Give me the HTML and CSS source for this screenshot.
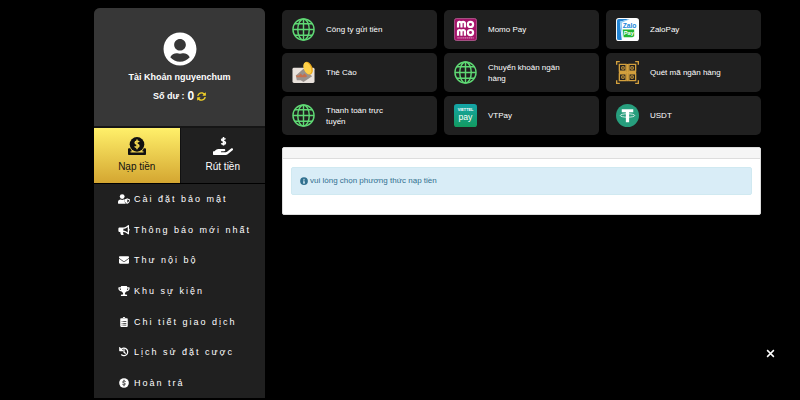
FILE: index.html
```html
<!DOCTYPE html>
<html lang="vi">
<head>
<meta charset="utf-8">
<meta name="viewport" content="width=device-width, initial-scale=1">
<title>Nạp tiền</title>
<link rel="stylesheet" href="styles.css">
</head>
<body>
<svg class="sprite" aria-hidden="true">
  <symbol id="globe" viewBox="0 0 24 24">
    <g fill="none" stroke="#5fd874" stroke-width="1.5">
      <circle cx="12" cy="12" r="11"/><ellipse cx="12" cy="12" rx="6" ry="11"/>
      <path d="M12 1v22M1 12h22M3 6h18M3 18h18"/>
    </g>
  </symbol>
</svg>
<div class="layout">
  <aside class="sidebar">
    <section class="profile">
      <svg class="avatar" viewBox="0 0 496 512" fill="currentColor" aria-hidden="true"><path d="M248 8C111 8 0 119 0 256s111 248 248 248 248-111 248-248S385 8 248 8zm0 96c48.600 0 88 39.400 88 88s-39.400 88-88 88-88-39.400-88-88 39.400-88 88-88zm0 344c-58.700 0-111.300-26.600-146.500-68.200 18.800-35.400 55.600-59.800 98.500-59.800 2.400 0 4.800.4 7.100 1.100 13 4.200 26.600 6.900 40.900 6.900 14.300 0 28-2.700 40.900-6.900 2.300-.7 4.700-1.100 7.100-1.100 42.900 0 79.700 24.400 98.500 59.800C359.300 421.400 306.700 448 248 448z"/></svg>
      <p class="name">Tài Khoản nguyenchum</p>
      <p class="balance">Số dư : <span class="amount">0</span>
        <button class="refresh" type="button" aria-label="Làm mới số dư"><svg viewBox="0 0 512 512" fill="currentColor"><path d="M370.700 133.300C339.500 104 298.900 88 255.800 88c-77.500.1-144.300 53.200-162.800 126.900-1.300 5.400-6.100 9.100-11.700 9.100H24.100c-7.500 0-13.200-6.800-11.800-14.200C33.900 94.900 134.800 8 256 8c66.400 0 126.800 26.100 171.300 68.700L463 41c15.100-15.100 41-4.400 41 17v134c0 13.300-10.700 24-24 24H346c-21.400 0-32.100-25.900-17-41l41.700-41.700zM32 296h134c21.400 0 32.100 25.900 17 41l-41.800 41.800c31.300 29.300 71.800 45.300 114.900 45.300 77.400-.1 144.300-53.100 162.800-126.800 1.300-5.400 6.100-9.100 11.700-9.100h57.300c7.500 0 13.200 6.800 11.800 14.200C478.100 417.100 377.200 504 256 504c-66.400 0-126.800-26.100-171.300-68.700L49 471c-15.100 15.100-41 4.400-41-17V320c0-13.300 10.700-24 24-24z"/></svg></button>
      </p>
    </section>
    <nav class="tabs">
      <a class="tab active" href="#nap">
        <svg viewBox="0 0 512 512" aria-hidden="true"><path fill="currentColor" d="M480 320h-34c-8 30-26 60-50 84h44v36H72v-36h44c-24-24-42-54-50-84H32c-18 0-32 14-32 32v128c0 18 14 32 32 32h448c18 0 32-14 32-32V352c0-18-14-32-32-32z"/><circle cx="256" cy="208" r="208" fill="currentColor"/><path d="M320 136c-18-18-112-36-118 20-7 64 114 36 110 102-4 50-98 42-122 8M256 68v280" fill="none" stroke="#f3d850" stroke-width="42"/></svg>
        <span>Nạp tiền</span>
      </a>
      <a class="tab" href="#rut">
        <svg class="hand" viewBox="0 0 576 512" aria-hidden="true"><path d="M362 62c-20-22-110-30-114 16-4 54 116 34 112 90-4 46-96 42-118 8M303 0v240" fill="none" stroke="currentColor" stroke-width="44"/><path fill="currentColor" d="M565 328c-12-11-30-10-43 0L404 422c-12 9-26 14-40 14H243c-9 0-16-7-16-16s7-16 16-16h78c16 0 31-11 33-27 3-20-12-37-32-37H162c-27 0-53 9-74 26l-47 38H16c-9 0-16 7-16 16v76c0 9 7 16 16 16h357c15 0 29-5 40-14l151-121c16-12 16-36 1-49z"/></svg>
        <span>Rút tiền</span>
      </a>
    </nav>
    <nav class="menu">
      <a href="#bao-mat"><svg viewBox="0 0 640 512" fill="currentColor" aria-hidden="true"><circle cx="224" cy="128" r="128"/><path d="M314 288h-17c-44 21-102 21-146 0h-17C60 288 0 348 0 422v42c0 27 21 48 48 48h376c-54-47-77-121-72-217-12-4-25-7-38-7z"/><path fill-rule="evenodd" d="m622 271-116-46c-10-4-16-4-26 0l-116 46c-11 4-19 15-19 28 0 115 70 181 135 208 8 4 18 4 26 0 52-21 134-81 134-208 0-13-7-24-18-28zM496 446V284l96 38c-5 64-45 105-96 124z"/></svg><span>Cài đặt bảo mật</span></a>
      <a href="#thong-bao"><svg viewBox="0 0 576 512" fill="currentColor" aria-hidden="true"><path fill-rule="evenodd" d="M576 240c0-24-13-44-32-55V32c0-9-7-32-32-32-7 0-14 2-20 7l-85 68c-43 34-96 53-151 53H64c-35 0-64 29-64 64v96c0 35 29 64 64 64h34c-5 40 6 88 32 139 6 13 18 21 31 21h74c26 0 42-30 26-51-23-31-25-77-15-109h10c55 0 108 19 151 53l85 68c25 19 52-4 52-25V295c19-11 32-31 32-55zm-96 141-33-26c-54-43-122-67-191-67v-96c69 0 137-24 191-67l33-26z"/></svg><span>Thông báo mới nhất</span></a>
      <a href="#thu"><svg viewBox="0 0 512 512" fill="currentColor" aria-hidden="true"><path d="M502 191c4-3 10 0 10 5v204c0 27-21 48-48 48H48c-27 0-48-21-48-48V196c0-5 6-8 10-5 22 17 52 39 154 114 21 15 57 48 92 47 35 1 72-32 92-47 102-75 132-97 154-114zM256 320c23 0 57-29 73-41 133-96 143-105 173-128 6-5 10-12 10-20v-19c0-27-21-48-48-48H48c-27 0-48 21-48 48v19c0 8 4 15 10 20 30 23 40 32 173 128 16 12 50 41 73 41z"/></svg><span>Thư nội bộ</span></a>
      <a href="#su-kien"><svg viewBox="0 0 576 512" fill="currentColor" aria-hidden="true"><path fill-rule="evenodd" d="M552 64H448V24c0-13-11-24-24-24H152c-13 0-24 11-24 24v40H24C11 64 0 75 0 88v56c0 36 22 72 62 100 32 22 70 36 110 41 31 51 68 72 68 72v75h-48c-35 0-64 21-64 56v12c0 7 5 12 12 12h296c7 0 12-5 12-12v-12c0-35-29-56-64-56h-48v-75s37-21 68-72c40-5 78-19 110-41 40-28 62-64 62-100V88c0-13-11-24-24-24zM99 192c-25-17-35-36-35-48v-16h64c1 33 6 62 14 86-16-5-30-13-43-22zm413-48c0 17-18 36-35 48-13 9-27 17-43 22 8-26 13-53 14-86h64z"/></svg><span>Khu sự kiện</span></a>
      <a href="#giao-dich"><svg viewBox="0 0 384 512" fill="currentColor" aria-hidden="true"><path fill-rule="evenodd" d="M336 64h-80c0-35-29-64-64-64s-64 29-64 64H48C21 64 0 85 0 112v352c0 27 21 48 48 48h288c27 0 48-21 48-48V112c0-27-21-48-48-48zM72 212h46v40H72zm76 0h164v40H148zM72 302h46v40H72zm76 0h164v40H148zM72 392h46v40H72zm76 0h164v40H148zM192 40a24 24 0 1 1 0 48 24 24 0 0 1 0-48z"/></svg><span>Chi tiết giao dịch</span></a>
      <a href="#lich-su"><svg viewBox="0 0 512 512" aria-hidden="true"><path fill="currentColor" d="M8 24v168c0 13 11 24 24 24h168c22 0 32-26 17-41L49 7C34-8 8 2 8 24z"/><path d="M104 132A192 192 0 1 1 128 400M256 135v130l68 54" fill="none" stroke="currentColor" stroke-width="64" stroke-linecap="round"/></svg><span>Lịch sử đặt cược</span></a>
      <a href="#hoan-tra"><svg viewBox="0 0 512 512" aria-hidden="true"><circle cx="256" cy="256" r="248" fill="currentColor"/><path d="M340 185c-22-32-152-45-159 18-7 65 155 41 151 105-4 52-126 48-160 8M256 90v60M256 362v60" fill="none" stroke="#202020" stroke-width="44"/></svg><span>Hoàn trả</span></a>
    </nav>
  </aside>
  <main class="content">
    <div class="methods">
      <button class="method" type="button"><svg viewBox="0 0 24 24" aria-hidden="true"><use href="#globe"/></svg><span>Công ty gửi tiền</span></button>
      <button class="method" type="button"><svg viewBox="0 0 24 24" aria-hidden="true"><rect x=".5" y=".5" width="23" height="23" rx="2" fill="#a6156b" stroke="#d580b2" stroke-width=".6"/><g fill="none" stroke="#fff" stroke-width="2.300"><path d="M4.200 10V5.600Q4.200 4 5.800 4T7.800 5.600V10M7.800 5.600Q7.800 4 9.600 4T11.400 5.600V10M4.200 18.500v-4.400q0-1.600 1.600-1.600t2 1.600v4.400M7.800 14.100q0-1.600 1.800-1.600t1.800 1.600v4.400"/><circle cx="17.200" cy="6.700" r="2.700"/><circle cx="17.200" cy="15.200" r="2.700"/></g><path d="M3.500 20.800h17" stroke="#e7a8cd" stroke-width="1" stroke-dasharray="1.500 .5"/></svg><span>Momo Pay</span></button>
      <button class="method" type="button"><svg viewBox="0 0 24 24" aria-hidden="true"><rect width="24" height="24" rx="3" fill="#fff"/><path d="M3 1h11L4 4l2 19H3q-2 0-2-2V3q0-2 2-2z" fill="#2385d5"/><path d="m4 4 11-3-9 4 1 17z" fill="#8bcaf3"/><text x="7" y="10.500" class="logo zalo">Zalo</text><path d="M7 12h12v7l-2 1H8z" fill="#21b735"/><text x="8" y="18" class="logo zpay">Pay</text></svg><span>ZaloPay</span></button>
      <button class="method" type="button"><svg viewBox="0 0 24 24" aria-hidden="true"><rect x=".5" y="7" width="23" height="16" rx="1.500" fill="#e9e2dc"/><path d="m4 15 8-7 9 8-9 6-3-2H5z" fill="#99918c"/><path d="M4 15h3l2-2 2 2 2-2 3 3-2 1H5z" fill="#c76f4b"/><ellipse cx="17" cy="7.500" rx="4.300" ry="7" transform="rotate(-22 17 7.500)" fill="#e9a91c"/><ellipse cx="16" cy="7.500" rx="3.700" ry="6.500" transform="rotate(-22 16 7.500)" fill="#ffd149"/></svg><span>Thẻ Cào</span></button>
      <button class="method" type="button"><svg viewBox="0 0 24 24" aria-hidden="true"><use href="#globe"/></svg><span>Chuyển khoản ngân hàng</span></button>
      <button class="method" type="button"><svg viewBox="0 0 24 24" aria-hidden="true"><g fill="none" stroke="#d3a03d" stroke-width="1.400"><path d="M.7 4V.7H4M20 .7h3.300V4M.7 20v3.300H4M20 23.300h3.300V20"/><path d="M3.500 3.500h7v7h-7zM13.500 3.500h7v7h-7zM3.500 13.500h7v7h-7zM13.500 13.500h7v7h-7zM12 3v18M3 12h18"/></g><path fill="none" stroke="#d3a03d" d="M6 6h2.500v2.500H6zM15.500 6H18v2.500h-2.500zM6 15.500h2.500V18H6zM15.500 15.500H18V18h-2.500z"/></svg><span>Quét mã ngân hàng</span></button>
      <button class="method" type="button"><svg viewBox="0 0 24 24" aria-hidden="true"><use href="#globe"/></svg><span>Thanh toán trực tuyến</span></button>
      <button class="method" type="button"><svg viewBox="0 0 24 24" aria-hidden="true"><defs><linearGradient id="vt" x2="0" y2="1"><stop stop-color="#14a5a8"/><stop offset="1" stop-color="#139b60"/></linearGradient></defs><rect width="24" height="24" rx="3" fill="url(#vt)"/><text x="12" y="7" text-anchor="middle" class="logo viettel">VIETTEL</text><text x="12" y="17" text-anchor="middle" class="logo vpay">pay</text></svg><span>VTPay</span></button>
      <button class="method" type="button"><svg viewBox="0 0 24 24" aria-hidden="true"><circle cx="12" cy="12" r="12" fill="#279e7d"/><path d="M6 5.500h12v3h-4.300V19h-3.400V8.500H6z" fill="#fff"/><ellipse cx="12" cy="12" rx="7.500" ry="1.800" fill="none" stroke="#fff" stroke-width=".8"/></svg><span>USDT</span></button>
    </div>
    <section class="panel">
      <div class="panel-head"></div>
      <div class="panel-body">
        <p class="alert"><svg viewBox="0 0 512 512" aria-hidden="true"><circle cx="256" cy="256" r="248" fill="currentColor"/><circle cx="256" cy="148" r="44" fill="#d9edf7"/><path d="M196 222h96v132h28v54H192v-54h28v-78h-24z" fill="#d9edf7"/></svg> vui lòng chọn phương thức nạp tiền</p>
      </div>
    </section>
  </main>
</div>
<button class="close" type="button" aria-label="Đóng"><svg viewBox="0 0 8 8"><path d="m1 1 6 6M7 1 1 7" stroke="currentColor" stroke-width="1.300"/></svg></button>
</body>
</html>
```
FILE: styles.css
```css
* { box-sizing: border-box; }

body {
  margin: 0;
  background: #000;
  color: #fff;
  font-family: "Liberation Sans", Arial, sans-serif;
  font-size: 8px;
}

button {
  border: 0;
  padding: 0;
  background: none;
  color: inherit;
  font: inherit;
  cursor: pointer;
}

a { color: inherit; text-decoration: none; }
p { margin: 0; }
svg { display: block; flex: none; }
.sprite { position: absolute; width: 0; height: 0; }

.layout {
  display: flex;
  gap: 17px;
  min-height: 100vh;
  padding: 8px 39px 2px 94px;
}

.sidebar {
  display: flex;
  flex: 0 0 171px;
  flex-direction: column;
  border-radius: 6px 6px 0 0;
  overflow: hidden;
  background: #202020;
}

.profile {
  display: flex;
  flex-direction: column;
  align-items: center;
  height: 120px;
  padding-top: 24px;
  border-bottom: 2px solid #151515;
  background: #373737;
  font-size: 9px;
  font-weight: bold;
}

.avatar { width: 34px; height: 34px; }
.name { margin-top: 5px; line-height: 12px; }
.balance { display: flex; align-items: center; gap: 3px; margin-top: 5px; line-height: 16px; }
.amount { font-size: 12px; }
.refresh svg { width: 9px; height: 9px; color: #f0cf28; }

.tabs {
  display: grid;
  grid-template-columns: 1fr 1fr;
  border-bottom: 1px solid #000;
}

.tab {
  display: flex;
  flex-direction: column;
  align-items: center;
  gap: 4px;
  height: 55px;
  padding-top: 9px;
  font-size: 10px;
  line-height: 16px;
}

.tab svg { width: 18px; height: 18px; }
.tab .hand { width: 20px; }
.tab.active { background: linear-gradient(#fff06a, #d4a631); color: #111; }
.tab + .tab { border-left: 1px solid #111; }

.menu { display: flex; flex: 1; flex-direction: column; }

.menu a {
  display: flex;
  flex: 1;
  align-items: center;
  gap: 4px;
  padding-left: 24px;
  font-size: 9px;
  letter-spacing: 2px;
  line-height: 12px;
  white-space: nowrap;
}

.menu svg { width: 12px; height: 10px; }

.content { flex: 1; min-width: 0; padding-top: 2px; }

.methods {
  display: grid;
  grid-template-columns: repeat(3, 1fr);
  gap: 4px 7px;
}

.method {
  display: flex;
  align-items: center;
  gap: 11px;
  height: 39px;
  padding: 0 36px 0 10px;
  border-radius: 5px;
  background: #202020;
  line-height: 11px;
  text-align: left;
}

.method > svg { width: 23px; height: 23px; }

.logo { font-family: "Liberation Sans", Arial, sans-serif; font-weight: bold; }
.zalo { fill: #1686d9; font-size: 7px; }
.zpay { fill: #fff; font-size: 6px; }
.viettel { fill: #fff; font-size: 4px; }
.vpay { font-weight: normal; fill: #fff; font-size: 9px; }

.panel {
  margin-top: 12px;
  border: 1px solid #ddd;
  border-radius: 2px;
  overflow: hidden;
  background: #fff;
}

.panel-head { height: 11px; border-bottom: 1px solid #ddd; background: #f5f5f5; }
.panel-body { padding: 8px 8px 19px; }

.alert {
  display: flex;
  align-items: center;
  gap: 2px;
  padding: 8px;
  border: 1px solid #d0e9f1;
  border-radius: 2px;
  background: #d9edf7;
  color: #31708f;
  line-height: 10px;
}

.alert svg { width: 8px; height: 8px; }

.close { position: fixed; right: 25px; bottom: 42px; }
.close svg { width: 9px; height: 9px; }
```
